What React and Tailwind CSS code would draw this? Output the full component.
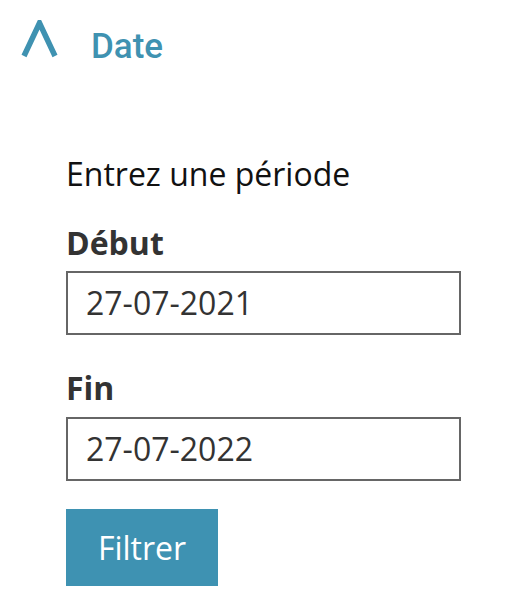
export default function App() {
  return (
    <div className="w-[530px] h-[616px] bg-white" style={{ fontFamily: '"Open Sans", sans-serif' }}>
      <div className="flex items-start pt-[20px] pl-[21px] h-[60px]">
        <svg width="38" height="38" viewBox="0 0 38 38" className="shrink-0">
          <polyline points="3,36 18.5,3 34,36" fill="none" stroke="#3f92b1" strokeWidth="5.5" strokeLinejoin="miter" />
        </svg>
        <span className="ml-[32px] mt-[9px] text-[35px] leading-none font-medium text-[#3f92b1]" style={{ fontFamily: 'Roboto, sans-serif' }}>
          Date
        </span>
      </div>
      <div className="pl-[66px] pt-[90px] w-[461px]">
        <p className="text-[32px] leading-[48px] text-[#111]">Entrez une période</p>
        <label className="block mt-[21px] text-[32px] leading-[48px] font-bold text-[#333]">Début</label>
        <div className="mt-[4px] h-[64px] border-2 border-[#666] flex items-center pl-[18px] text-[32px] text-[#333]">27-07-2021</div>
        <label className="block mt-[29px] text-[32px] leading-[48px] font-bold text-[#333]">Fin</label>
        <div className="mt-[5px] h-[64px] border-2 border-[#666] flex items-center pl-[18px] text-[32px] text-[#333]">27-07-2022</div>
        <button className="mt-[28px] w-[152px] h-[77px] bg-[#3e92b2] text-white text-[32px] flex items-center justify-center">Filtrer</button>
      </div>
    </div>
  );
}
